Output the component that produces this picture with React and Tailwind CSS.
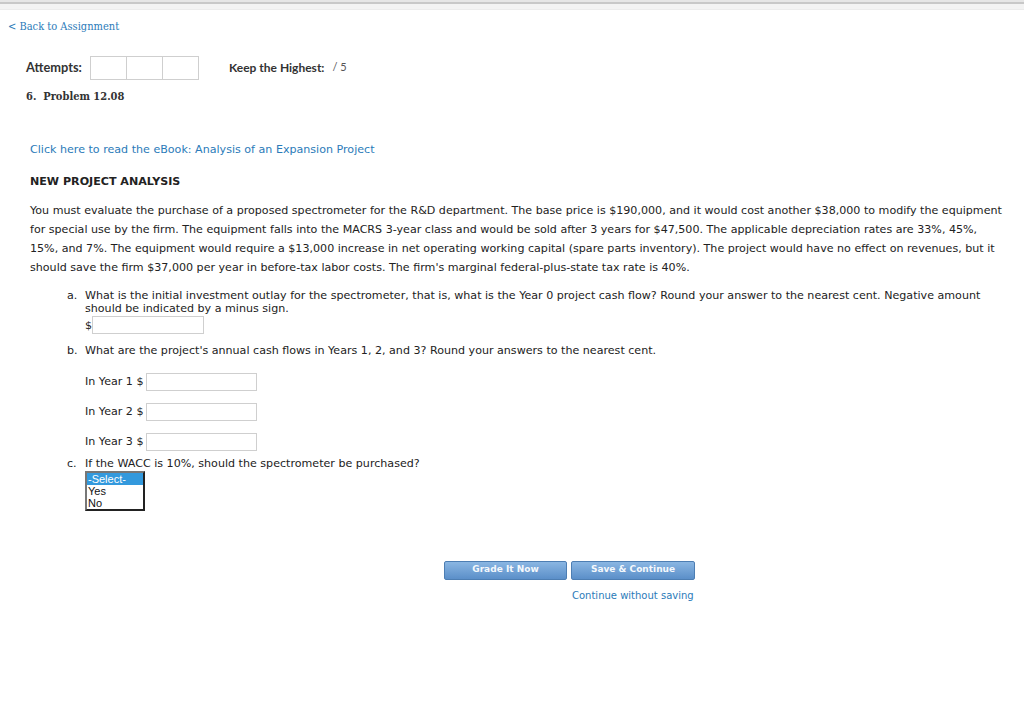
import { useState } from 'react'

const body = "font-['DejaVu_Sans','Verdana',sans-serif]"

function Field({ className = '' }) {
  return <input type="text" className={`h-[18px] border border-[#cfcfcf] bg-white outline-none ${className}`} />
}

export default function App() {
  const [answer, setAnswer] = useState('-Select-')

  return (
    <div className="min-h-[727px] bg-white text-[#222]">
      {/* top chrome */}
      <div className="h-[2px] bg-[#e6e6e6]" />
      <div className="h-[2px] bg-[#c8c8c8]" />
      <div className="h-[6px] bg-[#f3f3f3] border-b border-[#ececec]" />

      <div className="pl-[8px] pt-[9px] font-['DejaVu_Serif',serif] font-stretch-condensed text-[11px] text-[#2b7bb9]">
        &lt; Back to Assignment
      </div>

      {/* attempts row */}
      <div className="flex items-center pl-[26px] mt-[20px] font-['Lato',sans-serif] text-[12px]">
        <span className="font-bold text-[#333] w-[64px] text-[12.8px]">Attempts:</span>
        <div className="flex">
          {[0, 1, 2].map((i) => (
            <div key={i} className="w-[37px] h-[24px] border border-[#cfcfcf] -ml-px first:ml-0" />
          ))}
        </div>
        <span className="font-bold text-[#333] ml-[30px]">Keep the Highest:</span>
        <span className="ml-[8px] text-[#555] text-[11px]">/ 5</span>
      </div>

      <div className="pl-[26px] mt-[9px] font-['DejaVu_Serif',serif] font-stretch-condensed font-bold text-[11px] text-[#333]">
        6.&nbsp; Problem 12.08
      </div>

      <div className={`pl-[30px] pr-[18px] ${body} text-[11.1px]`}>
        <div className="mt-[37px] text-[#2b7bb9]">Click here to read the eBook: Analysis of an Expansion Project</div>
        <div className="mt-[15px] font-bold">NEW PROJECT ANALYSIS</div>
        <p className="mt-[11px] leading-[19px]">
          You must evaluate the purchase of a proposed spectrometer for the R&amp;D department. The base price is $190,000, and it would cost another $38,000 to modify the equipment for special use by the firm. The equipment falls into the MACRS 3-year class and would be sold after 3 years for $47,500. The applicable depreciation rates are 33%, 45%, 15%, and 7%. The equipment would require a $13,000 increase in net operating working capital (spare parts inventory). The project would have no effect on revenues, but it should save the firm $37,000 per year in before-tax labor costs. The firm's marginal federal-plus-state tax rate is 40%.
        </p>

        <ol className="mt-[12px] pl-[37px] pr-[10px]">
          <li className="flex leading-[13px]">
            <span className="w-[18px] shrink-0">a.</span>
            <div>
              <div>
                What is the initial investment outlay for the spectrometer, that is, what is the Year 0 project cash flow? Round your answer to the nearest cent. Negative amount should be indicated by a minus sign.
              </div>
              <div className="flex items-center mt-[1px]">
                <span>$</span>
                <Field className="w-[112px]" />
              </div>
            </div>
          </li>

          <li className="flex mt-[9px]">
            <span className="w-[18px] shrink-0">b.</span>
            <div>
              <div>What are the project's annual cash flows in Years 1, 2, and 3? Round your answers to the nearest cent.</div>
              <div className="mt-[13px] flex flex-col gap-[12px]">
                {[1, 2, 3].map((y) => (
                  <div key={y} className="flex items-center">
                    <span>In Year {y} $</span>
                    <Field className="ml-[2px] w-[111px]" />
                  </div>
                ))}
              </div>
            </div>
          </li>

          <li className="flex mt-[5px]">
            <span className="w-[18px] shrink-0">c.</span>
            <div>
              <div>If the WACC is 10%, should the spectrometer be purchased?</div>
              <div className="-mt-[2px] w-[60px] border-2 border-[#222] border-t-[#777] border-l-[#777] font-['Liberation_Sans',sans-serif] text-[11px] leading-[12px]">
                {['-Select-', 'Yes', 'No'].map((o) => (
                  <div
                    key={o}
                    onClick={() => setAnswer(o)}
                    className={`px-px ${answer === o ? 'bg-[#3399dd] text-white' : 'text-[#111]'}`}
                  >
                    {o}
                  </div>
                ))}
              </div>
            </div>
          </li>
        </ol>
      </div>

      {/* actions */}
      <div className="mt-[50px] flex flex-col items-start pl-[444px] font-['DejaVu_Sans',sans-serif]">
        <div className="flex gap-[4px]">
          <button className="w-[123px] h-[19px] rounded-[2px] border border-[#4d7eb3] bg-gradient-to-b from-[#8ab6e2] to-[#5b8fc9] text-[#f4f8fc] text-[9px] font-bold">
            Grade It Now
          </button>
          <button className="w-[124px] h-[19px] rounded-[2px] border border-[#4d7eb3] bg-gradient-to-b from-[#8ab6e2] to-[#5b8fc9] text-[#f4f8fc] text-[9px] font-bold">
            Save &amp; Continue
          </button>
        </div>
        <div className="ml-[128px] mt-[8px] text-[10px] text-[#2b7bb9]">Continue without saving</div>
      </div>
    </div>
  )
}
